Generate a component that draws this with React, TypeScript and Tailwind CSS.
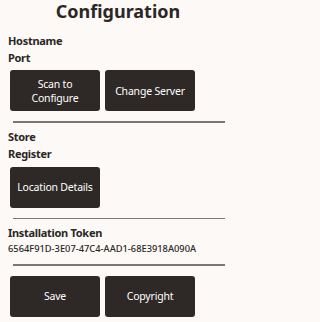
import React from 'react';

const font = { fontFamily: '"Noto Sans", "Open Sans", sans-serif' };

function DarkButton({ children }: { children: React.ReactNode }) {
    return (
        <button className="flex h-[41px] w-[90px] items-center justify-center whitespace-nowrap rounded-[3px] bg-[#2e2926] text-center text-[10.5px] leading-[14px] tracking-[-0.2px] text-white">
            {children}
        </button>
    );
}

function Label({ children }: { children: React.ReactNode }) {
    return (
        <div className="ml-2 text-[11px] font-bold leading-[17px] tracking-[-0.3px] text-[#2b2624]">{children}</div>
    );
}

function Divider() {
    return <div className="ml-[13px] h-[1.5px] w-[212px] bg-[#7a7776]" />;
}

export default function App() {
    return (
        <div className="h-[322px] w-full overflow-hidden bg-[#fcf9f6]" style={font}>
            <div className="w-[236px]">
                {/* Title */}
                <h1 className="text-center text-[18px] font-bold leading-[22px] text-[#2b2726]">Configuration</h1>

                {/* Server */}
                <div className="mt-[10px]">
                    <Label>Hostname</Label>
                    <Label>Port</Label>
                </div>
                <div className="ml-[10px] mt-[4px] flex gap-[5px]">
                    <DarkButton>
                        Scan to
                        <br />
                        Configure
                    </DarkButton>
                    <DarkButton>Change Server</DarkButton>
                </div>
                <div className="mt-[10px]">
                    <Divider />
                </div>

                {/* Location */}
                <div className="mt-[5px]">
                    <Label>Store</Label>
                    <Label>Register</Label>
                </div>
                <div className="ml-[10px] mt-[5px] flex">
                    <DarkButton>Location Details</DarkButton>
                </div>
                <div className="mt-[10px]">
                    <Divider />
                </div>

                {/* Token */}
                <div className="mt-[5px]">
                    <Label>Installation Token</Label>
                    <div className="ml-2 mt-[1px] text-[9.3px] font-medium leading-[14px] text-[#2b2624]">
                        6564F91D-3E07-47C4-AAD1-68E3918A090A
                    </div>
                </div>
                <div className="mt-[8px]">
                    <Divider />
                </div>

                <div className="ml-[10px] mt-[10px] flex gap-[5px]">
                    <DarkButton>Save</DarkButton>
                    <DarkButton>Copyright</DarkButton>
                </div>
            </div>
        </div>
    );
}
